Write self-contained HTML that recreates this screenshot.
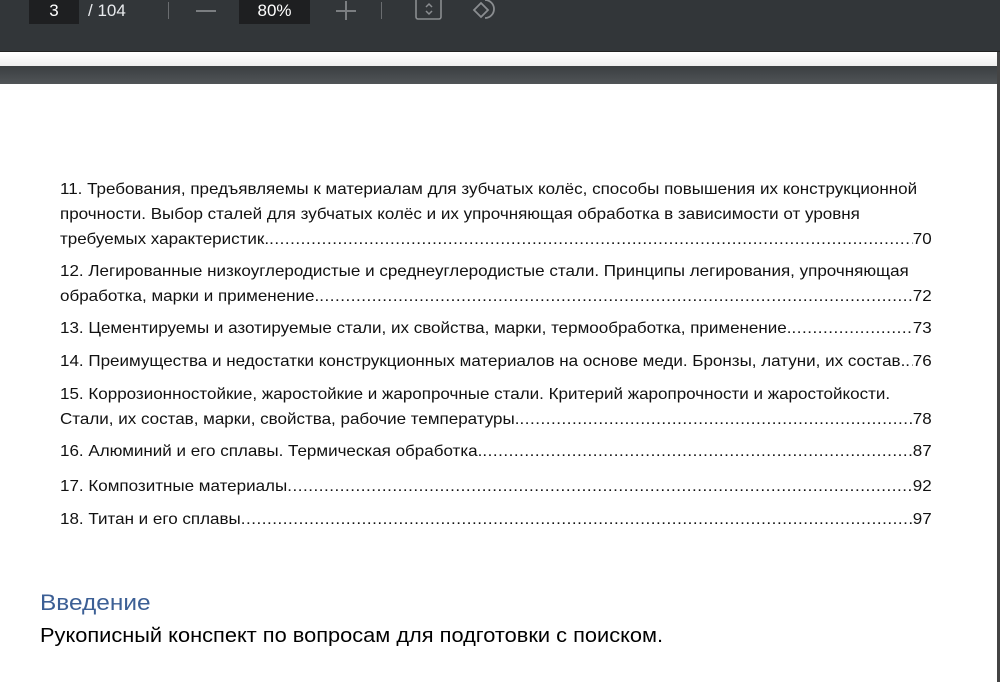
<!DOCTYPE html>
<html><head><meta charset="utf-8"><style>
*{margin:0;padding:0;box-sizing:border-box}
body{width:1000px;height:682px;overflow:hidden;background:#fff;font-family:"Liberation Sans",sans-serif;position:relative}
.tb{position:absolute;left:0;top:0;width:1000px;height:52px;background:#323639;border-bottom:1px solid #222}
.box{position:absolute;top:0;height:24px;background:#1e1f21;color:#fff;font-size:17px;line-height:22px;text-align:center}
.t{position:absolute;color:#e8eaed;font-size:17px;line-height:22px;top:0}
.sep{position:absolute;top:2px;width:1px;height:17px;background:#6a6d70}
.strip{position:absolute;left:0;top:53px;width:997px;height:13px;background:linear-gradient(#fff,#eee)}
.gray{position:absolute;left:0;top:66px;width:1000px;height:18px;background:linear-gradient(#3a3e41,#505457)}
.rb{position:absolute;left:997px;top:52px;width:3px;height:630px;background:#444}
.toc{position:absolute;left:60px;top:0;width:820px;transform:scaleX(1.063);transform-origin:0 0;font-family:"Liberation Sans",sans-serif;font-size:16px;color:#111}
.l{position:absolute;left:0;width:820px;white-space:nowrap;height:20px;line-height:20px}
.f{display:flex}
.f .d{flex:1;overflow:hidden;letter-spacing:0.5px}
.h{position:absolute;left:40px;top:588px;font-size:22px;color:#3c5f95;line-height:30px;transform:scaleX(1.11);transform-origin:0 0}
.p{position:absolute;left:40px;top:622px;font-size:20px;color:#000;line-height:28px;transform:scaleX(1.09);transform-origin:0 0;white-space:nowrap}
</style></head><body>
<div class="tb">
<div class="box" style="left:29px;width:50px">3</div>
<div class="t" style="left:88px">/ 104</div>
<div class="sep" style="left:168px"></div>
<div style="position:absolute;left:196px;top:10px;width:20px;height:2px;background:#7b7e81"></div>
<div class="box" style="left:239px;width:71px">80%</div>
<div style="position:absolute;left:336px;top:10px;width:20px;height:2px;background:#7b7e81"></div>
<div style="position:absolute;left:345px;top:1px;width:2px;height:19px;background:#7b7e81"></div>
<div class="sep" style="left:381px"></div>
<svg style="position:absolute;left:414px;top:0" width="30" height="22" viewBox="0 0 30 22"><rect x="2" y="-2" width="25" height="21" fill="none" stroke="#8a8d90" stroke-width="1.6" rx="2"/><path d="M12 7l3-3 3 3M12 11l3 3 3-3" fill="none" stroke="#8a8d90" stroke-width="1.5"/></svg>
<svg style="position:absolute;left:470px;top:-4px" width="32" height="26" viewBox="0 0 32 26"><path d="M4 14l7-7 7 7-7 7z" fill="none" stroke="#8a8d90" stroke-width="1.8"/><path d="M15 4a9 9 0 1 1 0 18" fill="none" stroke="#8a8d90" stroke-width="1.8"/></svg>
</div>
<div class="strip"></div>
<div class="gray"></div>
<div class="rb"></div>
<div class="toc">
<div class="l" style="top:180px">11. Требования, предъявляемы к материалам для зубчатых колёс, способы повышения их конструкционной</div>
<div class="l" style="top:205px">прочности. Выбор сталей для зубчатых колёс и их упрочняющая обработка в зависимости от уровня</div>
<div class="l f" style="top:230px"><span>требуемых характеристик. </span><span class="d">....................................................................................................................................................................................................................................................</span><span>70</span></div>
<div class="l" style="top:262px">12. Легированные низкоуглеродистые и среднеуглеродистые стали. Принципы легирования, упрочняющая</div>
<div class="l f" style="top:287px"><span>обработка, марки и применение. </span><span class="d">....................................................................................................................................................................................................................................................</span><span>72</span></div>
<div class="l f" style="top:319px"><span>13. Цементируемы и азотируемые стали, их свойства, марки, термообработка, применение. </span><span class="d">....................................................................................................................................................................................................................................................</span><span>73</span></div>
<div class="l f" style="top:352px"><span>14. Преимущества и недостатки конструкционных материалов на основе меди. Бронзы, латуни, их состав. </span><span class="d">....................................................................................................................................................................................................................................................</span><span>76</span></div>
<div class="l" style="top:385px">15. Коррозионностойкие, жаростойкие и жаропрочные стали. Критерий жаропрочности и жаростойкости.</div>
<div class="l f" style="top:410px"><span>Стали, их состав, марки, свойства, рабочие температуры. </span><span class="d">....................................................................................................................................................................................................................................................</span><span>78</span></div>
<div class="l f" style="top:442px"><span>16. Алюминий и его сплавы. Термическая обработка. </span><span class="d">....................................................................................................................................................................................................................................................</span><span>87</span></div>
<div class="l f" style="top:477px"><span>17. Композитные материалы </span><span class="d">....................................................................................................................................................................................................................................................</span><span>92</span></div>
<div class="l f" style="top:510px"><span>18. Титан и его сплавы</span><span class="d">....................................................................................................................................................................................................................................................</span><span>97</span></div>
</div>
<div class="h">Введение</div>
<div class="p">Рукописный конспект по вопросам для подготовки с поиском.</div>
</body></html>
